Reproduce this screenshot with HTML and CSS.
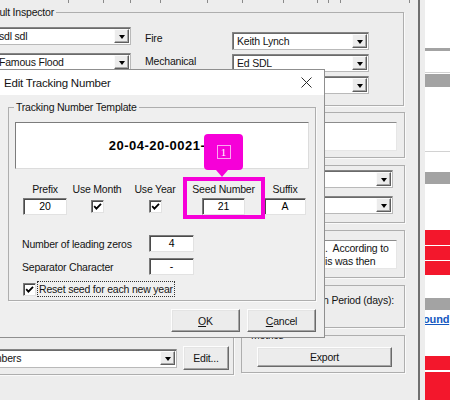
FILE: index.html
```html
<!DOCTYPE html>
<html lang="en">
<head>
    <meta charset="UTF-8">
    <meta name="viewport" content="width=device-width, initial-scale=1.0">
    <title>Edit Tracking Number</title>
    <link rel="stylesheet" href="styles.css">
</head>
<body>

    <div class="desk">
        <div class="form">
            <div class="ruler">
                <span></span><span></span><span></span><span></span><span></span><span></span>
                <span></span><span></span><span></span><span></span><span></span>
            </div>

            <div class="group inspector">
                <span class="caption">Default Inspector</span>
                <div class="col col-pick">
                    <div class="combo"><span>sdl sdl</span><b class="drop"></b></div>
                    <div class="combo"><span>Famous Flood</span><b class="drop"></b></div>
                </div>
                <div class="col col-names">
                    <span>Fire</span>
                    <span>Mechanical</span>
                    <span>Electrical</span>
                </div>
                <div class="col col-people">
                    <div class="combo"><span>Keith Lynch</span><b class="drop"></b></div>
                    <div class="combo"><span>Ed SDL</span><b class="drop"></b></div>
                    <div class="combo"><span></span><b class="drop"></b></div>
                </div>
            </div>

            <div class="lower">
                <div class="group numbering">
                    <span class="caption">Numbering</span>
                    <div class="num-row">
                        <div class="combo num-combo"><span>Numbers</span><b class="drop"></b></div>
                        <button class="btn edit">Edit...</button>
                    </div>
                </div>

                <div class="stack">
                    <div class="group g-notes"><div class="memo"></div></div>
                    <div class="group g-lists">
                        <div class="combo"><span></span><b class="drop"></b></div>
                        <div class="combo"><span></span><b class="drop"></b></div>
                    </div>
                    <div class="group g-info">
                        <div class="memo memo-text">
                            <div>.&nbsp; According to</div>
                            <div>is was then</div>
                        </div>
                    </div>
                    <div class="group g-period"><span class="period">Retention Period (days):</span></div>
                    <div class="group g-metrics">
                        <span class="caption">Metrics</span>
                        <button class="btn export">Export</button>
                    </div>
                </div>
            </div>
        </div>

        <div class="side">
            <div class="w"></div><div class="g"></div><div class="w"></div><div class="ln"></div>
            <div class="w"></div><div class="g"></div><div class="w"></div><div class="ln"></div>
            <div class="w"></div><div class="g"></div><div class="w"></div><div class="r"></div>
            <div class="w"></div><div class="r"></div><div class="w"></div><div class="r"></div>
            <div class="w"></div><div class="g"></div>
            <div class="w link"><a>Background</a></div>
            <div class="w"></div><div class="r"></div><div class="w"></div><div class="r"></div>
        </div>
    </div>

    <!-- modal on top of the inspector form -->
    <div class="dialog">
        <div class="titlebar">
            <span>Edit Tracking Number</span>
            <svg class="close" width="11" height="11" viewBox="0 0 11 11">
                <path d="M0.5 0.5 L10.5 10.5 M10.5 0.5 L0.5 10.5" stroke="#2b2b2b" stroke-width="1" fill="none"/>
            </svg>
        </div>

        <div class="group tpl">
            <span class="caption">Tracking Number Template</span>
            <div class="preview">20-04-20-0021-A</div>

            <div class="parts">
                <div class="part"><label>Prefix</label><div class="field">20</div></div>
                <div class="part"><label>Use Month</label><span class="check"><svg width="9" height="9" viewBox="0 0 9 9"><path d="M1.2 4.2 L3.4 6.6 L8 1.8" stroke="#000" stroke-width="1.8" fill="none"/></svg></span></div>
                <div class="part"><label>Use Year</label><span class="check"><svg width="9" height="9" viewBox="0 0 9 9"><path d="M1.2 4.2 L3.4 6.6 L8 1.8" stroke="#000" stroke-width="1.8" fill="none"/></svg></span></div>
                <div class="part"><label>Seed Number</label><div class="field">21</div></div>
                <div class="part"><label>Suffix</label><div class="field">A</div></div>
            </div>

            <div class="opt first">
                <label>Number of leading zeros</label>
                <div class="field">4</div>
            </div>
            <div class="opt">
                <label>Separator Character</label>
                <div class="field">-</div>
            </div>

            <div class="reset">
                <span class="check"><svg width="9" height="9" viewBox="0 0 9 9"><path d="M1.2 4.2 L3.4 6.6 L8 1.8" stroke="#000" stroke-width="1.8" fill="none"/></svg></span>
                <span class="focus">Reset seed for each new year</span>
            </div>
        </div>

        <div class="buttons">
            <button class="btn"><u>O</u>K</button>
            <button class="btn"><u>C</u>ancel</button>
        </div>
    </div>

    <div class="callout"><span>1</span></div>
    <div class="mark"></div>

</body>
</html>
```

FILE: styles.css
```css
body {
    margin: 0;
    width: 450px;
    height: 400px;
    overflow: hidden;
    position: relative;
    background: #ededed;
    font-family: "Liberation Sans", Arial, sans-serif;
    font-size: 10.5px;
    letter-spacing: -0.2px;
    color: #141414;
}

.desk {
    display: flex;
    height: 400px;
}

/* background form */
.form {
    flex: none;
    margin-left: -34px;
    width: 454px;
    box-sizing: border-box;
    border-right: 2px solid #6f6f6f;
}

.ruler {
    display: grid;
    grid-template-columns: 103px 35px 27px 30px 47px 35px 41px 34px 11px 12px 69px;
    height: 3px;
}

.ruler span {
    border-right: 1px solid #8a8a8a;
}

.group {
    position: relative;
    box-sizing: border-box;
    border: 1px solid #aeaeae;
    box-shadow: 1px 1px 0 #fafafa;
}

.caption {
    position: absolute;
    top: -7px;
    left: 7px;
    padding: 0 2px;
    line-height: 13px;
    white-space: nowrap;
    background: #ededed;
}

.inspector {
    display: flex;
    margin: 9px 0 0 2px;
    width: 436px;
    height: 94px;
    padding: 14px 0 0 25px;
}

.col {
    display: flex;
    flex-direction: column;
    flex: none;
}

.col-pick {
    width: 137px;
    gap: 8px;
}

.col-names {
    width: 87px;
    margin-left: 14px;
    line-height: 23px;
}

.col-people {
    width: 137px;
    gap: 4px;
    margin-top: 5px;
}

.combo {
    display: flex;
    align-items: center;
    height: 18px;
    box-sizing: border-box;
    padding: 0 1px 0 4px;
    background: #fff;
    border: 1px solid;
    border-color: #858585 #b9b9b9 #b9b9b9 #858585;
    box-shadow: inset 1px 1px #6a6a6a;
}

.combo span {
    flex: 1;
    white-space: nowrap;
    overflow: hidden;
}

.drop {
    flex: none;
    display: flex;
    align-items: center;
    justify-content: center;
    width: 15px;
    height: 14px;
    box-sizing: border-box;
    background: #ececec;
    border: 1px solid;
    border-color: #fbfbfb #5e5e5e #5e5e5e #fbfbfb;
    box-shadow: inset -1px -1px #a8a8a8;
}

.drop::before {
    content: "";
    border-left: 3.5px solid transparent;
    border-right: 3.5px solid transparent;
    border-top: 4px solid #000;
    margin-top: 1px;
}

.lower {
    display: flex;
    margin-top: 6px;
}

.numbering {
    flex: none;
    margin-left: 2px;
    width: 266px;
    height: 263px;
    display: flex;
    flex-direction: column;
    justify-content: flex-end;
    padding: 0 4px 4px 6px;
}

.num-row {
    display: flex;
    align-items: center;
    gap: 6px;
}

.num-combo {
    width: 202px;
    height: 19px;
}

.btn {
    font: inherit;
    letter-spacing: inherit;
    color: #141414;
    padding: 0;
    background: #ececec;
    border: 1px solid;
    border-color: #fdfdfd #6a6a6a #6a6a6a #fdfdfd;
    box-shadow: inset -1px -1px #a5a5a5, inset 1px 1px #e4e4e4;
}

.edit {
    width: 46px;
    height: 24px;
}

.stack {
    flex: none;
    width: 164px;
    margin-left: 7px;
    display: flex;
    flex-direction: column;
}

.stack .group + .group {
    margin-top: 7px;
}

.memo {
    box-sizing: border-box;
    height: 29px;
    background: #fff;
    border: 1px solid;
    border-color: #8c8c8c #e6e6e6 #e6e6e6 #8c8c8c;
}

.g-notes {
    height: 46px;
    padding: 9px 7px 0 8px;
}

.g-lists {
    height: 58px;
    display: flex;
    flex-direction: column;
    align-items: flex-end;
    gap: 8px;
    padding: 4px 11px 0 0;
}

.g-lists .combo {
    width: 130px;
}

.g-info {
    height: 48px;
    padding: 9px 7px 0 8px;
}

.memo-text {
    padding: 1px 0 0 74px;
    line-height: 13px;
    white-space: nowrap;
}

.stack .g-period {
    height: 43px;
    margin-top: 9px;
    padding: 8px 10px 0 0;
    text-align: right;
    line-height: 13px;
}

.g-metrics {
    height: 38px;
    padding: 11px 0 0 15px;
}

.export {
    width: 135px;
    height: 20px;
}

/* list strip at the right edge */
.side {
    flex: none;
    width: 25px;
    margin-left: 5px;
    display: grid;
    grid-template-rows: 48px 3px 21px 1px 1px 13px 64px 1px 20px 12px 46px 15px 1px 14px 1px 14px 23px 12px 18px 28px 14px 2px 28px;
}

.w { background: #fff; }
.g { background: #a3a3a3; }
.ln { background: #d2d2d2; }
.r { background: #f3172c; }

.link {
    overflow: hidden;
    white-space: nowrap;
    line-height: 18px;
}

.link a {
    display: inline-block;
    margin-left: -38px;
    font-weight: bold;
    font-size: 11px;
    color: #1558c0;
    text-decoration: underline;
}

/* Edit Tracking Number dialog */
.dialog {
    position: absolute;
    left: -4px;
    top: 69px;
    width: 329px;
    height: 269px;
    box-sizing: border-box;
    background: #efefef;
    border: 1px solid #8f8f8f;
}

.titlebar {
    display: flex;
    align-items: center;
    justify-content: space-between;
    height: 25px;
    padding: 0 12px 0 7px;
    background: #fff;
    font-size: 11.5px;
}

.dialog .caption {
    background: #efefef;
    left: 5px;
}

.tpl {
    width: 308px;
    margin: 12px 0 0 11px;
    padding: 14px 6px 3px 6px;
}

.preview {
    display: flex;
    align-items: center;
    justify-content: center;
    height: 47px;
    box-sizing: border-box;
    background: #fff;
    border: 1px solid;
    border-color: #7c7c7c #dcdcdc #dcdcdc #7c7c7c;
    font-weight: bold;
    font-size: 13px;
    letter-spacing: 0.5px;
    color: #000;
}

.parts {
    display: grid;
    grid-template-columns: 60px 44px 72px 65px 58px;
    margin-top: 14px;
}

.part {
    display: flex;
    flex-direction: column;
    align-items: center;
    gap: 2px;
}

.part label {
    line-height: 13px;
    white-space: nowrap;
}

.field {
    width: 44px;
    height: 17px;
    box-sizing: border-box;
    background: #fff;
    border: 1px solid;
    border-color: #7a7a7a #e2e2e2 #e2e2e2 #7a7a7a;
    box-shadow: inset 1px 1px #4a4a4a;
    text-align: center;
    line-height: 15px;
    color: #000;
}

.part:nth-child(4) .field {
    width: 43px;
}

.part:nth-child(5) .field {
    width: 42px;
}

.check {
    display: flex;
    align-items: center;
    justify-content: center;
    width: 13px;
    height: 13px;
    margin-top: 2px;
    box-sizing: border-box;
    background: #fff;
    border: 1px solid;
    border-color: #7a7a7a #e2e2e2 #e2e2e2 #7a7a7a;
    box-shadow: inset 1px 1px #4a4a4a;
}

.opt {
    display: flex;
    align-items: center;
    margin-top: 6px;
}

.opt.first {
    margin-top: 20px;
}

.opt label {
    width: 134px;
    box-sizing: border-box;
    padding-left: 7px;
}

.opt .field {
    width: 45px;
}

.reset {
    display: flex;
    align-items: center;
    margin-top: 6px;
    padding-left: 8px;
    height: 16px;
}

.reset .check {
    margin-top: 0;
}

.focus {
    margin-left: 1px;
    padding: 0 1px;
    line-height: 14px;
    border: 1px dotted #333;
}

.buttons {
    display: flex;
    justify-content: flex-end;
    gap: 7px;
    margin-top: 8px;
    padding-right: 8px;
}

.buttons .btn {
    width: 69px;
    height: 23px;
}

/* step marker over the dialog */
.callout {
    position: absolute;
    left: 204px;
    top: 134px;
    width: 39px;
    height: 36px;
    display: flex;
    align-items: center;
    justify-content: center;
    background: #f600d8;
    border-radius: 4px;
}

.callout::after {
    content: "";
    position: absolute;
    left: 12px;
    bottom: -7px;
    border-left: 6px solid transparent;
    border-right: 6px solid transparent;
    border-top: 7px solid #f600d8;
}

.callout span {
    width: 14px;
    height: 14px;
    box-sizing: border-box;
    border: 1px solid rgba(255, 255, 255, 0.65);
    color: #fff;
    font-family: "Liberation Serif", serif;
    font-size: 11px;
    line-height: 12px;
    text-align: center;
}

.mark {
    position: absolute;
    left: 183px;
    top: 177px;
    width: 82px;
    height: 42px;
    box-sizing: border-box;
    border: 4px solid #f600d8;
}
```
